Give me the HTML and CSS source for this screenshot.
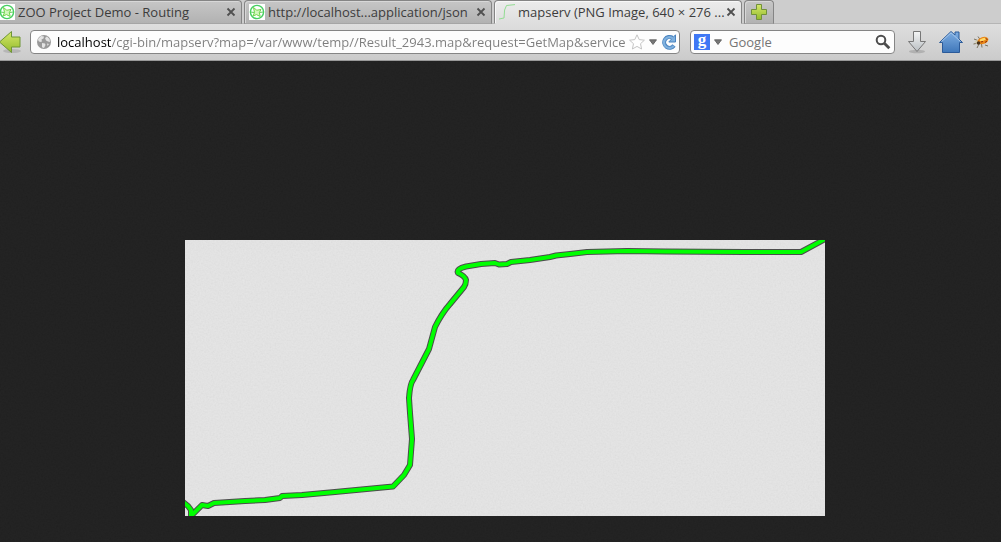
FILE: index.html
```html
<!DOCTYPE html>
<html lang="en">
<head>
<meta charset="utf-8">
<title>mapserv (PNG Image, 640 × 276 pixels)</title>
<link rel="stylesheet" href="styles.css">
</head>
<body>
<svg class="defs" aria-hidden="true">
  <defs>
    <linearGradient id="green" x1="0" y1="0" x2="0" y2="1"><stop offset="0" stop-color="#d5e86c"/><stop offset="1" stop-color="#94bb2c"/></linearGradient>
    <linearGradient id="blue" x1="0" y1="0" x2="0" y2="1"><stop offset="0" stop-color="#7faee2"/><stop offset="1" stop-color="#3f77ba"/></linearGradient>
    <linearGradient id="silver" x1="0" y1="0" x2="0" y2="1"><stop offset="0" stop-color="#f4f5f5"/><stop offset="1" stop-color="#b9bec2"/></linearGradient>
    <filter id="grain" x="0" y="0" width="100%" height="100%">
      <feTurbulence type="fractalNoise" baseFrequency="0.6" numOctaves="2" seed="4"/>
      <feColorMatrix type="saturate" values="0"/>
      <feComponentTransfer><feFuncA type="linear" slope="0" intercept="1"/></feComponentTransfer>
    </filter>
    <symbol id="zoo" viewBox="0 0 16 16">
      <rect width="16" height="16" fill="#fff"/>
      <circle cx="8" cy="8" r="6.600" fill="#fff" stroke="#45cf62" stroke-width="1.400"/>
      <path d="M4.500 3.500l3.300 2.700 4.200-.7-1.700 3 .9 4-3.700-1.900-3.500 1.400 1.500-3.500z" fill="#d2f6bd" stroke="#6fd648" stroke-width="1"/>
      <path d="M10.500 8.500l3.800-.5M5.300 8.500L1.500 8" stroke="#62d35a" fill="none"/>
    </symbol>
    <symbol id="close" viewBox="0 0 10 10"><path d="M1.500 1.500l7 7M8.500 1.500l-7 7" stroke="#505050" stroke-width="1.800"/></symbol>
    <symbol id="caret" viewBox="0 0 8 6"><path d="M.5.800h7L4 5.500z" fill="#777" stroke="#555" stroke-width=".8"/></symbol>
  </defs>
</svg>

<header class="chrome">
  <div class="tabs" role="tablist">
    <div class="tab" role="tab">
      <svg class="favicon"><use href="#zoo"/></svg>
      <span class="tab-title">ZOO Project Demo - Routing</span>
      <button class="tab-close" aria-label="Close tab"><svg><use href="#close"/></svg></button>
    </div>
    <div class="tab" role="tab">
      <svg class="favicon"><use href="#zoo"/></svg>
      <span class="tab-title">http://localhost...application/json</span>
      <button class="tab-close" aria-label="Close tab"><svg><use href="#close"/></svg></button>
    </div>
    <div class="tab tab-active" role="tab" aria-selected="true">
      <svg class="favicon" viewBox="0 0 16 16"><path d="M0 15l5-1 .6-8L7.500 1.500 16 .6" fill="none" stroke="#93dc93" stroke-width="1"/></svg>
      <span class="tab-title">mapserv (PNG Image, 640 × 276 ...</span>
      <button class="tab-close" aria-label="Close tab"><svg><use href="#close"/></svg></button>
    </div>
    <button class="new-tab" aria-label="New tab">
      <svg class="favicon" viewBox="0 0 16 16"><path d="M5.500.5h5v5h5v5h-5v5h-5v-5h-5v-5h5z" fill="url(#green)" stroke="#71913a"/></svg>
    </button>
  </div>

  <div class="toolbar">
    <button class="icon-button back" aria-label="Back">
      <svg width="22" height="24" viewBox="0 0 22 24"><ellipse cx="13" cy="21" rx="9" ry="2" fill="#000" opacity=".12"/><path d="M.5 12L12.500 1.500v5.500h8.500v10h-8.500v5.500z" fill="url(#green)" stroke="#6f9636"/></svg>
    </button>
    <div class="field url-field">
      <svg width="14" height="14" viewBox="0 0 14 14"><circle cx="7" cy="7" r="7" fill="#9a9a9a"/><path d="M1 4l3-3 3 .5-.5 2-2 1L5 6.500 3 7 1.500 6zM8 3l2-1.500L12.500 4l.5 3-2-.5L9 5.500zM5 8l3 .5.5 1.500L7 13l-2-.8zM10 8.500l2 .5-1.500 2z" fill="#e4e4e4"/></svg>
      <input class="url" type="text" aria-label="Address" value="localhost/cgi-bin/mapserv?map=/var/www/temp//Result_2943.map&amp;request=GetMap&amp;service">
      <button class="icon-button" aria-label="Bookmark"><svg width="16" height="16" viewBox="0 0 16 16"><path d="M8 .8l2.200 4.800 5.200.6-3.900 3.500 1.100 5.300L8 12.400 3.400 15l1.100-5.300L.6 6.200l5.200-.6z" fill="#fff" stroke="#c4c4c4"/></svg></button>
      <button class="icon-button drop" aria-label="Show history"><svg width="8" height="6"><use href="#caret"/></svg></button>
      <button class="icon-button reload" aria-label="Reload"><svg width="16" height="16" viewBox="0 0 16 16"><path d="M13 11.500A5.400 5.400 0 1 1 11.500 3.800" fill="none" stroke="#4a83bf" stroke-width="4"/><path d="M14.500.8v7.200H7.800z" fill="#7fb1df" stroke="#4a83bf"/><path d="M12.700 11.800A5.400 5.400 0 1 1 12 4.500" fill="none" stroke="#7fb1df" stroke-width="2.200"/></svg></button>
    </div>
    <div class="field search-field">
      <button class="icon-button engine" aria-label="Search engine">
        <span class="engine-logo">g</span>
        <svg width="8" height="6"><use href="#caret"/></svg>
      </button>
      <input class="search" type="text" aria-label="Search" placeholder="Google">
      <button class="icon-button" aria-label="Search"><svg width="16" height="16" viewBox="0 0 16 16"><circle cx="6" cy="6" r="4.300" fill="none" stroke="#4d4d4d" stroke-width="2"/><path d="M9.300 9.300l5 5" stroke="#4d4d4d" stroke-width="2.800"/></svg></button>
    </div>
    <div class="actions">
      <button class="icon-button" aria-label="Downloads"><svg width="20" height="24" viewBox="0 0 20 24"><ellipse cx="10" cy="21.500" rx="8" ry="1.800" fill="#000" opacity=".15"/><path d="M6.500 1.500h7v10h5L10 21.500 1.500 11.500h5z" fill="url(#silver)" stroke="#777"/></svg></button>
      <button class="icon-button" aria-label="Home"><svg width="24" height="24" viewBox="0 0 24 24"><path d="M3.500 22.500v-10h-3L12 1.500l4 3.500V2h4v7l3.500 3.500h-3v10z" fill="url(#blue)" stroke="#2b5a99"/><path d="M2.500 11.600L12 2.800l9.500 8.700" fill="none" stroke="#a9c9ec" stroke-width="1"/></svg></button>
      <button class="icon-button" aria-label="Firebug"><svg width="16" height="14" viewBox="0 0 16 14"><path d="M1 4l5 2M.5 9l5-1M4 13l2-4M9 12.500l-.5-3.500M12 10l3 1M5 1.500l2 3" stroke="#71674f" stroke-width=".9"/><path d="M1.500 6L7 4.500 6 8.500l-3 .5z" fill="#d5d0b6"/><ellipse cx="10" cy="5.500" rx="5.500" ry="3.500" transform="rotate(-18 10 5.500)" fill="#e98616"/><ellipse cx="10" cy="4.400" rx="3.400" ry="1.300" transform="rotate(-18 10 4.400)" fill="#ffd968"/><path d="M12.500 3l2 2M8 7l2-.5M12 7.500l2-1.500" stroke="#8f2c0b"/><circle cx="5.500" cy="8" r="1.800" fill="#4b341b"/></svg></button>
    </div>
  </div>
</header>

<main class="viewer">
  <svg class="grain"><rect width="100%" height="100%" filter="url(#grain)"/></svg>
  <svg class="map" viewBox="0 0 640 276" role="img" aria-label="Route map">
    <defs>
      <path id="route" d="M-2 262L3 266 6 270V276L17 265 23 266 29 263 60 261 80 260 95 258 97 256 117 255 150 252 208 246.500 219 235 225 225 227 199 225 173 224 158Q225 144 228 140L244 109 250 87Q257 73 265 64L279 47Q281 44 281 40 280 36 273 33 271 29 281 26.500L296 24 310 23 314 24.500 322 24 326 22 345 20 365 17 371 15.500 385 14 402 12 442 11 480 11.500 560 12 616 12 642-2"/>
    </defs>
    <rect width="640" height="276" fill="#e6e6e6"/>
    <rect width="640" height="276" filter="url(#grain)" opacity=".08"/>
    <g fill="none" stroke-linejoin="round">
      <use href="#route" stroke="#4c4c4c" stroke-width="6"/>
      <use href="#route" stroke="#0f0" stroke-width="4"/>
    </g>
  </svg>
</main>
</body>
</html>
```
FILE: styles.css
```css
* { box-sizing: border-box; }

body {
  margin: 0;
  min-height: 100vh;
  display: flex;
  flex-direction: column;
  background: #1c1c1c;
  font: 13px/18px "Open Sans", "Noto Sans", sans-serif;
  color: #3c3c3c;
  overflow-x: hidden;
}

.defs { position: absolute; width: 0; height: 0; }

button {
  padding: 0;
  border: 0;
  background: none;
  font: inherit;
  color: inherit;
}

svg { display: block; }

.tabs {
  display: flex;
  gap: 2px;
  height: 24px;
  padding-right: 8px;
  margin-left: -6px;
  background: #cdcdcd;
  box-shadow: inset 0 -1px #b5b5b5;
}

.tab, .new-tab {
  display: flex;
  align-items: center;
  border: 1px solid #858585;
  border-bottom-color: #a5a5a5;
  border-radius: 4px 4px 0 0;
  background: linear-gradient(#c6c6c6, #b2b2b2);
  box-shadow: inset 1px 1px #d8d8d8;
}

.tab {
  flex: 0 1 248px;
  min-width: 0;
  padding: 0 5px 0 4px;
}

.tab-active {
  background: linear-gradient(#ececec, #dedede);
  border-bottom-color: #dedede;
  box-shadow: inset 1px 1px #f8f8f8;
}

.new-tab { padding: 0 6px; }

.favicon { width: 16px; height: 16px; flex: none; }

.tab-title {
  flex: 1;
  min-width: 0;
  margin-left: 3px;
  overflow: hidden;
  white-space: nowrap;
}

.tab-close svg { width: 10px; height: 10px; }

.toolbar {
  display: flex;
  align-items: center;
  height: 37px;
  padding-right: 12px;
  background: linear-gradient(#dedede, #cbcbcb);
  border-bottom: 1px solid #999;
}

.back { width: 30px; }
.back svg { margin-left: -1px; }

.field {
  display: flex;
  align-items: center;
  height: 24px;
  border: 1px solid #858585;
  border-radius: 4px;
  background: #fdfdfd;
}

.url-field {
  flex: 1;
  min-width: 0;
  padding: 0 2px 0 6px;
  margin-right: 10px;
}

.search-field {
  flex: 0 1 205px;
  min-width: 0;
  padding: 0 3px;
}

input {
  flex: 1;
  min-width: 0;
  height: 20px;
  padding: 0;
  border: 0;
  outline: 0;
  background: none;
  font: inherit;
}

.url {
  margin: 0 1px 0 6px;
  color: transparent;
  caret-color: #000;
  background: linear-gradient(90deg, #000 54px, #7d7d7d 54px);
  -webkit-background-clip: text;
  background-clip: text;
}

.search { margin-left: 7px; }
.search::placeholder { color: #757575; opacity: 1; }

.drop { padding: 3px 4px; }

.engine { display: flex; align-items: center; gap: 4px; }

.engine-logo {
  width: 16px;
  height: 16px;
  background: #3f78f5;
  color: #fff;
  font: bold 17px/12px "Liberation Serif", serif;
}

.actions {
  display: flex;
  align-items: center;
  gap: 12px;
  padding-left: 12px;
}

.actions :nth-child(3) { margin-left: -2px; }

.viewer {
  position: relative;
  flex: 1;
  display: flex;
  justify-content: center;
  padding: 179px 0 26px 9px;
}

.grain {
  position: absolute;
  inset: 0;
  width: 100%;
  height: 100%;
  opacity: .04;
}

.map {
  position: relative;
  flex: 0 1 640px;
  min-width: 0;
  height: auto;
}
```
